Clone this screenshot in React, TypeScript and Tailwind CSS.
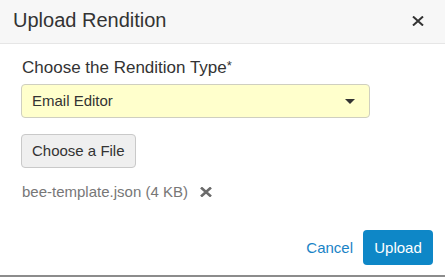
const font = { fontFamily: '"Liberation Sans", Arial, sans-serif' };

function CloseIcon({ className, stroke }: { className?: string; stroke: number }) {
  return (
    <svg width="12" height="10" viewBox="0 0 12 10" className={className}>
      <path d="M1 0.5 L11 9.5 M11 0.5 L1 9.5" stroke="currentColor" strokeWidth={stroke} />
    </svg>
  );
}

export default function App() {
  return (
    <div
      className="w-[445px] h-[277px] bg-white text-[#333] border-b-2 border-[#8c8c8c] flex flex-col"
      style={font}
    >
      {/* header */}
      <div className="h-[44px] bg-[#f7f7f7] border-b border-[#e6e6e6] flex items-start justify-between pl-[13px] pr-[21px] pt-[8px] shrink-0">
        <h2 className="text-[20px] leading-[24px] text-[#333]">Upload Rendition</h2>
        <button className="mt-[8px] text-[#333]">
          <CloseIcon stroke={2} />
        </button>
      </div>

      {/* body */}
      <div className="pl-[21px] pt-[14px]">
        <label className="block text-[17px] leading-[20px] pl-[1px]">
          Choose the Rendition Type<span className="text-[13px] align-top leading-[16px]">*</span>
        </label>
        <div className="mt-[6px] w-[349px] h-[34px] bg-[#ffffcc] border border-[#cfcfc0] rounded-[4px] flex items-center justify-between pl-[10px] pr-[14px]">
          <span className="text-[15px] leading-[20px]">Email Editor</span>
          <svg width="10" height="5" viewBox="0 0 10 5">
            <path d="M0 0 H10 L5 5 Z" fill="#333" />
          </svg>
        </div>

        <button className="mt-[16px] h-[34px] px-[10px] bg-[#efefef] border border-[#c9c9c9] rounded-[4px] text-[15px] leading-[20px] text-[#333]">
          Choose a File
        </button>

        <div className="mt-[14px] h-[20px] flex items-center pl-[1px]">
          <span className="text-[15px] leading-[20px] text-[#777]">bee-template.json (4 KB)</span>
          <button className="ml-[12px] text-[#6b6b6b]">
            <CloseIcon stroke={2.6} />
          </button>
        </div>
      </div>

      {/* footer */}
      <div className="mt-[28px] flex items-center justify-end pr-[12px] gap-[10px]">
        <button className="text-[15px] leading-[20px] text-[#1a83c6]">Cancel</button>
        <button className="w-[70px] h-[35px] rounded-[4px] bg-[#0e87c7] text-white text-[15px] leading-[20px]">
          Upload
        </button>
      </div>
    </div>
  );
}
